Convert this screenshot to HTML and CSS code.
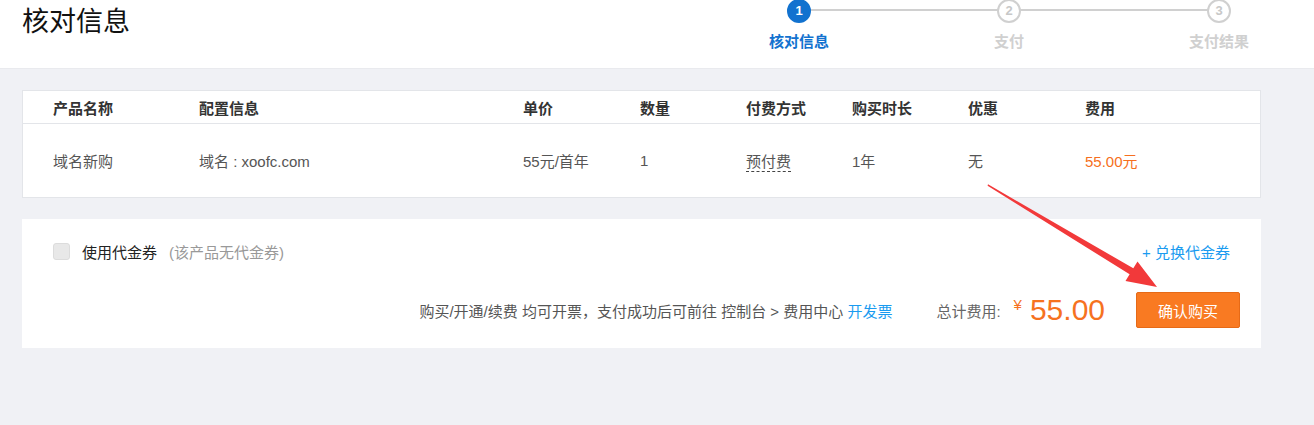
FILE: index.html
```html
<!DOCTYPE html>
<html lang="zh-CN">
<head>
    <meta charset="UTF-8">
    <meta name="viewport" content="width=device-width, initial-scale=1.0">
    <title>核对信息</title>
    <link rel="stylesheet" href="styles.css">
</head>
<body>

    <div class="header">
        <h1 class="title">核对信息</h1>
        <div class="steps">
            <div class="step done">
                <span class="num">1</span>
                <span class="label">核对信息</span>
            </div>
            <div class="step">
                <span class="num">2</span>
                <span class="label">支付</span>
            </div>
            <div class="step">
                <span class="num">3</span>
                <span class="label">支付结果</span>
            </div>
        </div>
    </div>

    <div class="main">
        <div class="order-table">
            <div class="row head">
                <div>产品名称</div>
                <div>配置信息</div>
                <div>单价</div>
                <div>数量</div>
                <div>付费方式</div>
                <div>购买时长</div>
                <div>优惠</div>
                <div>费用</div>
            </div>
            <div class="row body">
                <div>域名新购</div>
                <div>域名 : xoofc.com</div>
                <div>55元/首年</div>
                <div>1</div>
                <div><span class="dashed">预付费</span></div>
                <div>1年</div>
                <div>无</div>
                <div class="cost">55.00元</div>
            </div>
        </div>

        <div class="pay-box">
            <div class="voucher">
                <label class="check"><span class="box"></span>使用代金券</label>
                <span class="muted">(该产品无代金券)</span>
                <a href="#" class="link exchange">+ 兑换代金券</a>
            </div>
            <div class="total">
                <p class="note">购买/开通/续费 均可开票，支付成功后可前往 控制台 &gt; 费用中心 <a href="#" class="link">开发票</a></p>
                <span class="sum-label">总计费用:</span>
                <span class="yen">¥</span>
                <span class="amount">55.00</span>
                <button class="buy">确认购买</button>
            </div>
        </div>
    </div>

    <svg class="arrow" width="1314" height="425" viewBox="0 0 1314 425">
        <polygon points="988,184.3 1133.3,268.3 1137.5,261.5 1157,287 1125.5,281 1129.6,274.3 987.6,185.7" fill="#f2393a"/>
    </svg>

</body>
</html>
```

FILE: styles.css
```css
body {
    margin: 0;
    font-family: "Liberation Sans", "Noto Sans CJK SC", sans-serif;
    font-size: 15px;
    color: #333;
    background: #f0f1f5;
    position: relative;
}
a {
    text-decoration: none;
}
.header {
    height: 69px;
    background: #fff;
    border-bottom: 1px solid #e9eaee;
    box-sizing: border-box;
    display: flex;
    justify-content: space-between;
    padding: 0 35px 0 22px;
}
.title {
    margin: 9px 0 0;
    font-size: 27px;
    line-height: 27px;
    font-weight: normal;
    color: #111;
}
.steps {
    display: flex;
    gap: 90px;
    position: relative;
    margin-top: -1px;
}
.steps::before {
    content: "";
    position: absolute;
    left: 60px;
    right: 60px;
    top: 10px;
    height: 2px;
    background: #d0d0d0;
}
.step {
    width: 120px;
    display: flex;
    flex-direction: column;
    align-items: center;
    position: relative;
}
.num {
    width: 20px;
    height: 20px;
    border: 2px solid #d0d0d0;
    border-radius: 50%;
    background: #fff;
    color: #c8c8c8;
    font-size: 13px;
    font-weight: bold;
    line-height: 20px;
    text-align: center;
}
.label {
    margin-top: 9px;
    line-height: 20px;
    font-weight: bold;
    color: #d0d0d0;
}
.step.done .num {
    background: #1272cf;
    border-color: #1272cf;
    color: #fff;
}
.step.done .label {
    color: #1272cf;
}
.main {
    padding: 21px 53px 0 22px;
}
.order-table {
    background: #fff;
    border: 1px solid #e3e5e9;
}
.row {
    display: grid;
    grid-template-columns: 146px 324px 117px 106px 106px 116px 117px 1fr;
    padding-left: 30px;
    align-items: center;
}
.row.head {
    height: 32px;
    border-bottom: 1px solid #e3e5e9;
    font-weight: bold;
    color: #333;
}
.row.body {
    height: 73px;
    color: #555;
}
.dashed {
    border-bottom: 1px dashed #444;
    padding-bottom: 1px;
}
.cost {
    color: #f66f20;
}
.pay-box {
    margin-top: 21px;
    background: #fff;
    padding: 24px 21px 20px 31px;
}
.voucher {
    display: flex;
    align-items: center;
    height: 17px;
    padding-right: 10px;
}
.check {
    display: flex;
    align-items: center;
    color: #222;
}
.box {
    width: 15px;
    height: 15px;
    border: 1px solid #dcdcdc;
    border-radius: 3px;
    background: #e8e8e8;
    margin-right: 12px;
}
.muted {
    color: #999;
    margin-left: 12px;
}
.link {
    color: #1a9bf0;
}
.exchange {
    margin-left: auto;
}
.total {
    margin-top: 32px;
    display: flex;
    align-items: center;
    justify-content: flex-end;
    height: 36px;
}
.note {
    margin: 0 44px 0 0;
    color: #555;
}
.sum-label {
    color: #666;
}
.yen {
    color: #f6721f;
    margin: -12px 0 0 13px;
}
.amount {
    color: #f6721f;
    font-size: 30px;
    margin-left: 8px;
}
.buy {
    margin-left: 31px;
    width: 104px;
    height: 36px;
    background: #f97a22;
    border: 1px solid #e66a17;
    border-radius: 2px;
    color: #fff;
    font-family: inherit;
    font-size: 15px;
    cursor: pointer;
}
.arrow {
    position: absolute;
    left: 0;
    top: 0;
    pointer-events: none;
}
```
